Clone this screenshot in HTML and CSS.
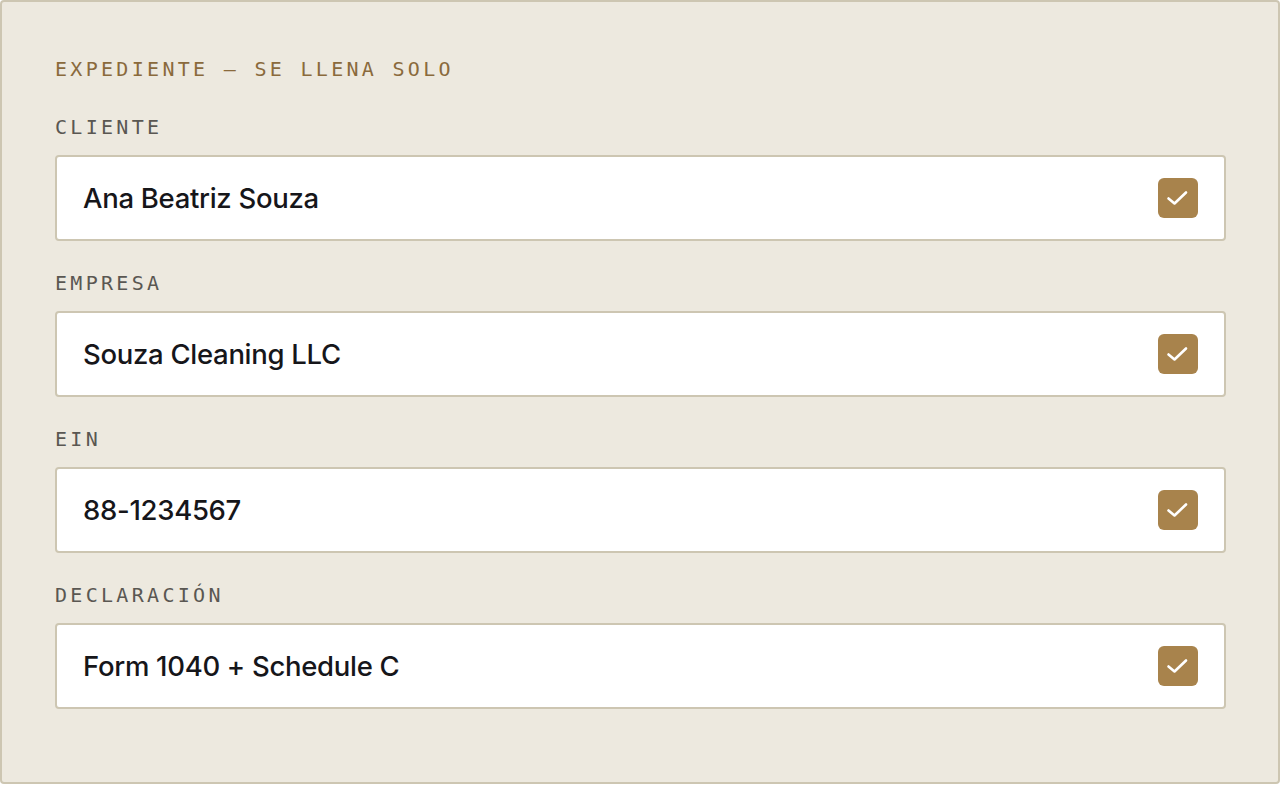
FILE: index.html
```html
<!DOCTYPE html>
<html lang="es">
<head>
<meta charset="utf-8">
<title>Expediente</title>
<link rel="stylesheet" href="styles.css">
</head>
<body>
<section class="panel">
  <h2 class="title">EXPEDIENTE — SE LLENA SOLO</h2>
  <div class="fields">
    <div class="field">
      <div class="label">CLIENTE</div>
      <div class="box">
        <span class="value">Ana Beatriz Souza</span>
        <span class="check"><svg viewBox="0 0 40 40" width="40" height="40"><path d="M10.5 20.5 L16.5 25.5 L28 14.5" fill="none" stroke="#fff" stroke-width="2.6" stroke-linecap="round" stroke-linejoin="round"/></svg></span>
      </div>
    </div>
    <div class="field">
      <div class="label">EMPRESA</div>
      <div class="box">
        <span class="value">Souza Cleaning LLC</span>
        <span class="check"><svg viewBox="0 0 40 40" width="40" height="40"><path d="M10.5 20.5 L16.5 25.5 L28 14.5" fill="none" stroke="#fff" stroke-width="2.6" stroke-linecap="round" stroke-linejoin="round"/></svg></span>
      </div>
    </div>
    <div class="field">
      <div class="label">EIN</div>
      <div class="box">
        <span class="value">88-1234567</span>
        <span class="check"><svg viewBox="0 0 40 40" width="40" height="40"><path d="M10.5 20.5 L16.5 25.5 L28 14.5" fill="none" stroke="#fff" stroke-width="2.6" stroke-linecap="round" stroke-linejoin="round"/></svg></span>
      </div>
    </div>
    <div class="field">
      <div class="label">DECLARACIÓN</div>
      <div class="box">
        <span class="value">Form 1040 + Schedule C</span>
        <span class="check"><svg viewBox="0 0 40 40" width="40" height="40"><path d="M10.5 20.5 L16.5 25.5 L28 14.5" fill="none" stroke="#fff" stroke-width="2.6" stroke-linecap="round" stroke-linejoin="round"/></svg></span>
      </div>
    </div>
  </div>
</section>
</body>
</html>
```

FILE: styles.css
```css
html, body {
  margin: 0;
  padding: 0;
  background: #ffffff;
}

.panel {
  box-sizing: border-box;
  width: 1280px;
  height: 784px;
  background: #ede9df;
  border: 2px solid #cdc6b2;
  border-radius: 4px;
  padding: 57px 52px 73px 53px;
}

.title {
  margin: 0 0 38px 0;
  font-family: "DejaVu Sans Mono", monospace;
  font-weight: normal;
  font-size: 20px;
  line-height: 20px;
  letter-spacing: 3.3px;
  color: #8a6a3c;
}

.fields {
  display: flex;
  flex-direction: column;
  gap: 32px;
}

.label {
  font-family: "DejaVu Sans Mono", monospace;
  font-size: 20px;
  line-height: 20px;
  letter-spacing: 3.3px;
  color: #5a5752;
  margin-bottom: 18px;
}

.box {
  box-sizing: border-box;
  height: 86px;
  background: #ffffff;
  border: 2px solid #cdc6b2;
  border-radius: 4px;
  padding: 0 26px;
  display: flex;
  align-items: center;
  justify-content: space-between;
}

.value {
  font-family: Inter, "Noto Sans", sans-serif;
  font-weight: 500;
  font-size: 27.5px;
  color: #16161a;
  letter-spacing: -0.3px;
}

.check {
  width: 40px;
  height: 40px;
  border-radius: 6px;
  background: #a8834c;
  display: flex;
}
```
